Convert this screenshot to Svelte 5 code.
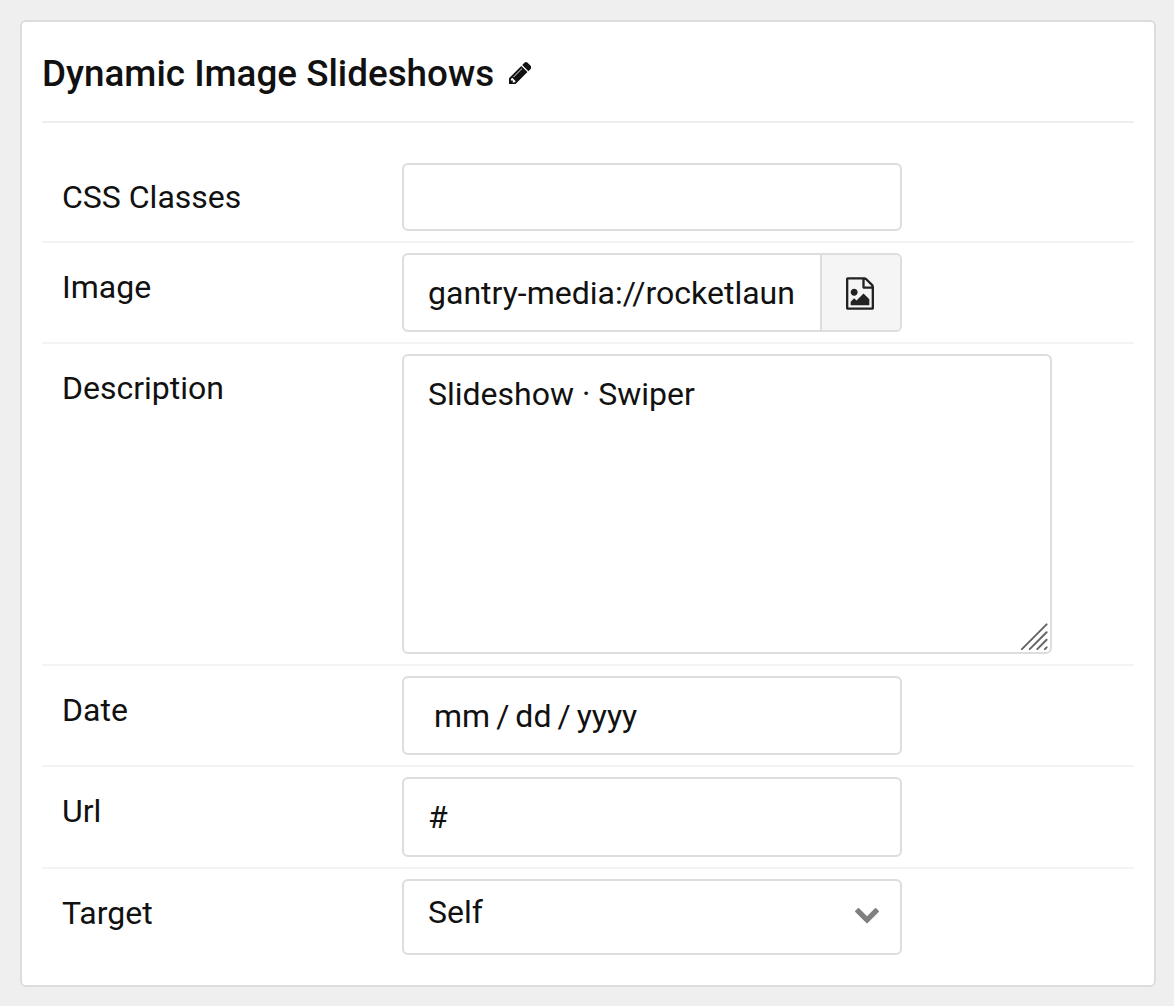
<script>
  let cssClasses = $state('');
  let image = $state('gantry-media://rocketlaun');
  let description = $state('Slideshow · Swiper');
  let url = $state('#');
</script>

<main class="page">
  <section class="card">
    <header class="head">
      <h4>Dynamic Image Slideshows</h4>
      <svg class="pencil" viewBox="128 149 1515 1515" aria-hidden="true">
        <path d="M491 1536l91-91-235-235-91 91v107h128v128h107zm523-928q0-22-22-22-10 0-17 7l-542 542q-7 7-7 17 0 22 22 22 10 0 17-7l542-542q7-7 7-17zm-54-192l416 416-832 832H128v-416zm683 96q0 53-37 90l-166 166-416-416 166-165q36-38 90-38 53 0 91 38l235 234q37 39 37 91z" />
      </svg>
    </header>

    <div class="fields">
      <div class="row">
        <label for="css">CSS Classes</label>
        <input id="css" class="control short" bind:value={cssClasses} />
      </div>
      <div class="row">
        <label for="image">Image</label>
        <div class="control group">
          <input id="image" bind:value={image} />
          <button type="button" aria-label="Choose image">
            <svg viewBox="0 0 1536 1792" aria-hidden="true">
              <path d="M1468 380q28 28 48 76t20 88v1152q0 40-28 68t-68 28H96q-40 0-68-28t-28-68V96q0-40 28-68T96 0h896q40 0 88 20t76 48zm-444-244v376h376q-10-29-22-41l-313-313q-12-12-41-22zm384 1528V640H992q-40 0-68-28t-28-68V128H128v1536h1280zm-128-448v320H256v-192l192-192 128 128 384-384zm-832-192q-80 0-136-56t-56-136 56-136 136-56 136 56 56 136-56 136-136 56z" />
            </svg>
          </button>
        </div>
      </div>
      <div class="row">
        <label for="description">Description</label>
        <div class="area">
          <textarea id="description" class="control" bind:value={description}></textarea>
          <svg class="grip" viewBox="0 0 28 28" aria-hidden="true">
            <path d="M1.9 26.1L26.6 1.4M9.7 26.1L26.6 9.2M17.3 26.1L26.6 16.8M24.9 26.1L26.6 24.4" />
          </svg>
        </div>
      </div>
      <div class="row">
        <span class="label">Date</span>
        <div class="control date">
          <span>mm</span><span class="slash">/</span><span>dd</span><span class="slash">/</span><span>yyyy</span>
        </div>
      </div>
      <div class="row">
        <label for="url">Url</label>
        <input id="url" class="control url" bind:value={url} />
      </div>
      <div class="row">
        <span class="label">Target</span>
        <div class="control select">
          <span>Self</span>
          <svg viewBox="90 533 1612 1035" aria-hidden="true">
            <path d="M1683 808l-742 741q-19 19-45 19t-45-19l-742-741q-19-19-19-45.5t19-45.5l166-165q19-19 45-19t45 19l531 531 531-531q19-19 45-19t45 19l166 165q19 19 19 45.5t-19 45.5z" />
          </svg>
        </div>
      </div>
    </div>
  </section>
</main>

<style>
  :global(body) {
    margin: 0;
    background: #efefef;
  }

  .page {
    box-sizing: border-box;
    height: 1006px;
    padding: 20px 18px 19px 20px;
    font-family: Roboto, sans-serif;
    font-size: 32px;
    line-height: 40px;
    color: #111;
  }

  .card {
    box-sizing: border-box;
    height: 967px;
    padding: 0 20px;
    background: #fff;
    border: 2px solid #ddd;
    border-radius: 6px;
  }

  .head {
    box-sizing: border-box;
    height: 101px;
    display: flex;
    align-items: center;
    gap: 14.5px;
    border-bottom: 2px solid #eee;
  }

  h4 {
    margin: 4px 0 0;
    font-size: 36.8px;
    line-height: 44px;
    font-weight: 500;
  }

  .pencil {
    width: 22.4px;
    height: 22.4px;
    margin-top: 3px;
    fill: #111;
  }

  .fields {
    padding-top: 30px;
  }

  .row {
    display: grid;
    grid-template-columns: 340px 1fr;
    align-items: start;
    padding: 10px 20px;
    border-bottom: 2px solid #f3f3f3;
  }

  .row:last-child {
    border-bottom: 0;
  }

  label,
  .label {
    padding-top: 14px;
  }

  .control {
    box-sizing: border-box;
    width: 500px;
    height: 79px;
    margin: 0;
    padding: 0 24px;
    border: 2px solid #ddd;
    border-radius: 6px;
    background: #fff;
    font: inherit;
    color: inherit;
    outline: none;
  }

  .control.short {
    height: 68px;
  }

  .control.url {
    height: 80px;
    padding-bottom: 1px;
  }

  .group {
    display: flex;
    padding: 0;
    overflow: hidden;
  }

  .group input {
    flex: 1;
    min-width: 0;
    padding: 0 24px;
    border: 0;
    background: none;
    font: inherit;
    color: inherit;
    outline: none;
  }

  .group button {
    box-sizing: border-box;
    width: 80px;
    padding: 2px 2px 0 0;
    display: flex;
    align-items: center;
    justify-content: center;
    border: 0;
    border-left: 2px solid #ddd;
    background: #f5f5f5;
  }

  .group svg {
    width: 28px;
    height: 33px;
    fill: #222;
  }

  .area {
    position: relative;
    width: 650px;
    height: 300px;
  }

  .area textarea {
    display: block;
    width: 650px;
    height: 300px;
    padding: 18px 24px;
    resize: none;
  }

  .grip {
    position: absolute;
    right: 4px;
    bottom: 3px;
    width: 28px;
    height: 28px;
    fill: none;
    stroke: #666;
    stroke-width: 2;
    stroke-linecap: round;
  }

  .date {
    display: flex;
    align-items: center;
    padding-left: 30px;
  }

  .slash {
    padding: 0 6px;
  }

  .select {
    height: 76px;
    display: flex;
    align-items: center;
    justify-content: space-between;
    padding: 0 21px 0 24px;
  }

  .select span {
    margin-top: -10px;
  }

  .select svg {
    width: 24px;
    height: 15.4px;
    margin-top: -2px;
    fill: #808080;
  }
</style>
